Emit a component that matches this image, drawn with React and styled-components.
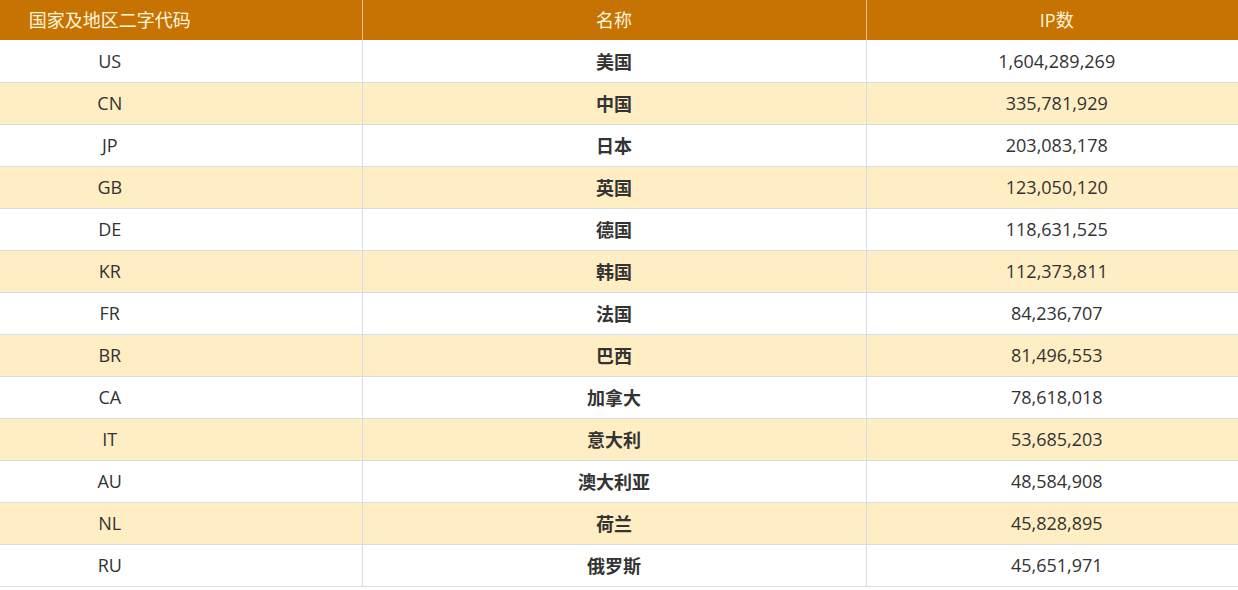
import styled, { createGlobalStyle } from "styled-components";

const GlobalStyle = createGlobalStyle`
  body {
    margin: 0;
    background: #fff;
    font-family: "Open Sans", "Noto Sans CJK SC", sans-serif;
    overflow: hidden;
  }
`;

const rows = [
  ["US", "美国", "1,604,289,269"],
  ["CN", "中国", "335,781,929"],
  ["JP", "日本", "203,083,178"],
  ["GB", "英国", "123,050,120"],
  ["DE", "德国", "118,631,525"],
  ["KR", "韩国", "112,373,811"],
  ["FR", "法国", "84,236,707"],
  ["BR", "巴西", "81,496,553"],
  ["CA", "加拿大", "78,618,018"],
  ["IT", "意大利", "53,685,203"],
  ["AU", "澳大利亚", "48,584,908"],
  ["NL", "荷兰", "45,828,895"],
  ["RU", "俄罗斯", "45,651,971"],
];

const App = () => {
  return (
    <>
      <GlobalStyle />
      <Table>
        <thead>
          <tr>
            <Head $first>国家及地区二字代码</Head>
            <Head>名称</Head>
            <Head $last>IP数</Head>
          </tr>
        </thead>
        <tbody>
          {rows.map(([code, name, ips], i) => (
            <Row key={code} $striped={i % 2 === 1}>
              <Cell $first>{code}</Cell>
              <Cell $bold>{name}</Cell>
              <Cell $last>{ips}</Cell>
            </Row>
          ))}
        </tbody>
      </Table>
    </>
  );
};
export default App;

const Table = styled.table`
  width: 1247px;
  border-collapse: collapse;
  table-layout: fixed;
`;

const Head = styled.th`
  height: 40px;
  padding: 0 0 3px;
  padding-right: ${({ $first }) => ($first ? "142px" : "0")};
  width: ${({ $first, $last }) => ($first ? "362px" : $last ? "381px" : "auto")};
  box-sizing: border-box;

  background-color: #c77303;
  color: #fff6dc;
  font-size: 18px;
  font-weight: 400;
  text-align: center;

  border-left: ${({ $first }) => ($first ? "none" : "1px solid #e8c48a")};
`;

const Row = styled.tr`
  height: 42px;
  background-color: ${({ $striped }) => ($striped ? "#ffedc3" : "#fff")};
  border-bottom: 1px solid #d5dde8;
`;

const Cell = styled.td`
  padding: 0;
  padding-right: ${({ $first }) => ($first ? "142px" : "0")};
  color: #333;
  font-size: 18px;
  font-weight: ${({ $bold }) => ($bold ? 700 : 400)};
  text-align: center;

  border-left: ${({ $first }) => ($first ? "none" : "1px solid #d5dde8")};
`;
